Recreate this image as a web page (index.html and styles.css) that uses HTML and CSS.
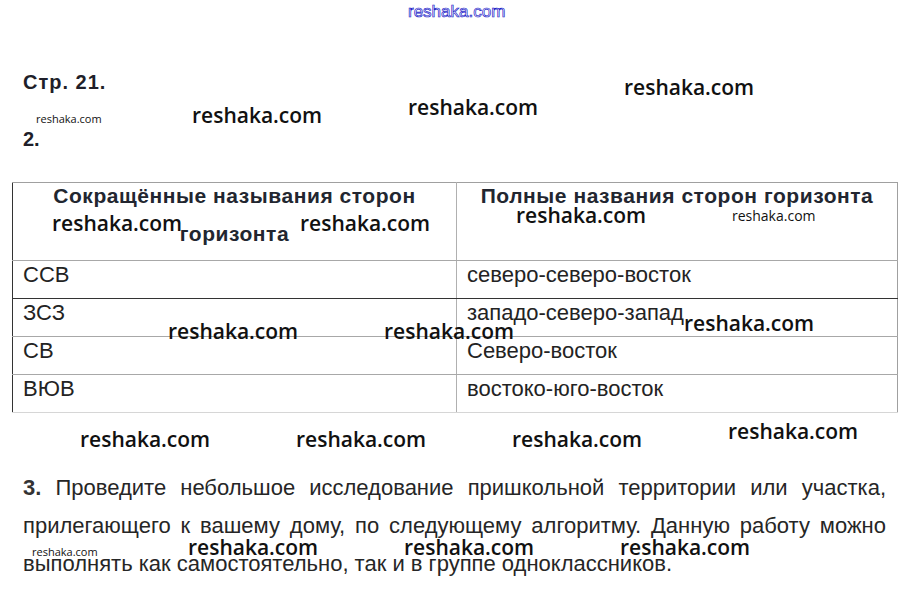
FILE: index.html
```html
<!DOCTYPE html>
<html lang="ru">
<head>
<meta charset="utf-8">
<title>Стр. 21</title>
<link rel="stylesheet" href="styles.css">
</head>
<body>
<div class="page">
  <h1 class="title">Стр. 21.</h1>
  <p class="num">2.</p>
  <table class="tbl">
    <tr class="head">
      <th class="c1"><div class="hd">Сокращённые называния сторон<br>горизонта</div></th>
      <th class="c2"><div class="hd">Полные названия сторон горизонта</div></th>
    </tr>
    <tr class="row row-dark"><td>ССВ</td><td>северо-северо-восток</td></tr>
    <tr class="row"><td>ЗСЗ</td><td>западо-северо-запад</td></tr>
    <tr class="row"><td>СВ</td><td>Северо-восток</td></tr>
    <tr class="row row-last"><td>ВЮВ</td><td>востоко-юго-восток</td></tr>
  </table>
  <div class="task">
    <p class="line just"><b>3.</b> Проведите небольшое исследование пришкольной территории или участка,</p>
    <p class="line just">прилегающего к вашему дому, по следующему алгоритму. Данную работу можно</p>
    <p class="line">выполнять как самостоятельно, так и в группе одноклассников.</p>
  </div>

  <div class="site">reshaka.com</div>
  <div class="wm wm-a">reshaka.com</div>
  <div class="wm wm-b">reshaka.com</div>
  <div class="wm wm-c">reshaka.com</div>
  <div class="wm-s wm-s1">reshaka.com</div>
  <div class="wm wm-t1">reshaka.com</div>
  <div class="wm wm-t2">reshaka.com</div>
  <div class="wm wm-t3">reshaka.com</div>
  <div class="wm-m wm-t4">reshaka.com</div>
  <div class="wm wm-r1">reshaka.com</div>
  <div class="wm wm-r2">reshaka.com</div>
  <div class="wm wm-r3">reshaka.com</div>
  <div class="wm wm-d">reshaka.com</div>
  <div class="wm wm-e">reshaka.com</div>
  <div class="wm wm-f">reshaka.com</div>
  <div class="wm wm-g">reshaka.com</div>
  <div class="wm-s wm-s2">reshaka.com</div>
  <div class="wm wm-h">reshaka.com</div>
  <div class="wm wm-i">reshaka.com</div>
  <div class="wm wm-j">reshaka.com</div>
</div>
</body>
</html>
```
FILE: styles.css
```css
html, body {
  margin: 0;
  padding: 0;
  background: #ffffff;
}

body {
  font-family: "Liberation Sans", Arial, sans-serif;
  color: #222222;
  width: 912px;
  height: 593px;
  overflow: hidden;
}

.page {
  position: relative;
  width: 912px;
  height: 593px;
  padding-top: 71px;
  box-sizing: border-box;
}

.title {
  margin: 0 0 0 23px;
  font-size: 20px;
  line-height: 22px;
  font-weight: bold;
  letter-spacing: 1px;
  color: #1f1f2a;
}

.num {
  margin: 35px 0 0 23px;
  font-size: 20px;
  line-height: 22px;
  font-weight: bold;
  color: #1f1f2a;
}

.tbl {
  margin: 32px 0 0 12px;
  width: 886px;
  border-collapse: collapse;
  table-layout: fixed;
}

.tbl th,
.tbl td {
  vertical-align: top;
  padding: 0;
}

.tbl .c1 { width: 443px; }

.head th {
  height: 77px;
  border-top: 1px solid #a0a0a0;
  border-bottom: 1px solid #a8a8a8;
  font-size: 21px;
  font-weight: bold;
  line-height: 38px;
  text-align: center;
  color: #222630;
  letter-spacing: 0.55px;
}

.head .c1 { border-left: 1px solid #333333; border-right: 1px solid #b0b0b0; }
.head .c2 { border-right: 1px solid #a0a0a0; }

.hd {
  margin-top: -6px;
}

.row td {
  height: 38px;
  box-sizing: border-box;
  border-bottom: 1px solid #a8a8a8;
  font-size: 22px;
  line-height: 24px;
  padding: 2px 9px 0 10px;
  color: #232323;
}

.row td:first-child { border-left: 1px solid #333333; border-right: 1px solid #b0b0b0; }
.row td:last-child { border-right: 1px solid #a0a0a0; }

.row-dark td { border-bottom-color: #333333; }
.row-last td { border-bottom-color: #d6d6d6; }

.task {
  margin: 56px 0 0 23px;
  width: 863px;
}

.line {
  margin: 0;
  font-size: 22px;
  line-height: 38px;
  letter-spacing: 0;
  color: #262626;
  white-space: nowrap;
}

.line b {
  font-weight: bold;
  color: #333333;
}

.line.just {
  text-align: justify;
  text-align-last: justify;
  white-space: normal;
}

/* watermarks */
.site {
  position: absolute;
  left: 408px;
  top: 3px;
  font-family: "Liberation Sans", Arial, sans-serif;
  font-size: 17px;
  line-height: 17px;
  color: #ffffff;
  -webkit-text-stroke: 0.7px #2020c8;
}

.wm,
.wm-s,
.wm-m {
  position: absolute;
  font-family: "Open Sans", "Noto Sans", sans-serif;
  color: #111111;
  line-height: 1;
  white-space: nowrap;
}

.wm { font-size: 21px; font-weight: 600; }
.wm-s { font-size: 11px; font-weight: 500; }
.wm-m { font-size: 14px; font-weight: 500; }

.wm-a { left: 624px; top: 77px; }
.wm-b { left: 192px; top: 105px; }
.wm-c { left: 408px; top: 97px; }
.wm-s1 { left: 36px; top: 113px; }

.wm-t1 { left: 52px; top: 213px; }
.wm-t2 { left: 300px; top: 213px; }
.wm-t3 { left: 516px; top: 205px; }
.wm-t4 { left: 732px; top: 209px; }

.wm-r1 { left: 168px; top: 321px; }
.wm-r2 { left: 384px; top: 321px; }
.wm-r3 { left: 684px; top: 313px; }

.wm-d { left: 80px; top: 429px; }
.wm-e { left: 296px; top: 429px; }
.wm-f { left: 512px; top: 429px; }
.wm-g { left: 728px; top: 421px; }

.wm-s2 { left: 32px; top: 546px; }
.wm-h { left: 188px; top: 537px; }
.wm-i { left: 404px; top: 537px; }
.wm-j { left: 620px; top: 537px; }
```
